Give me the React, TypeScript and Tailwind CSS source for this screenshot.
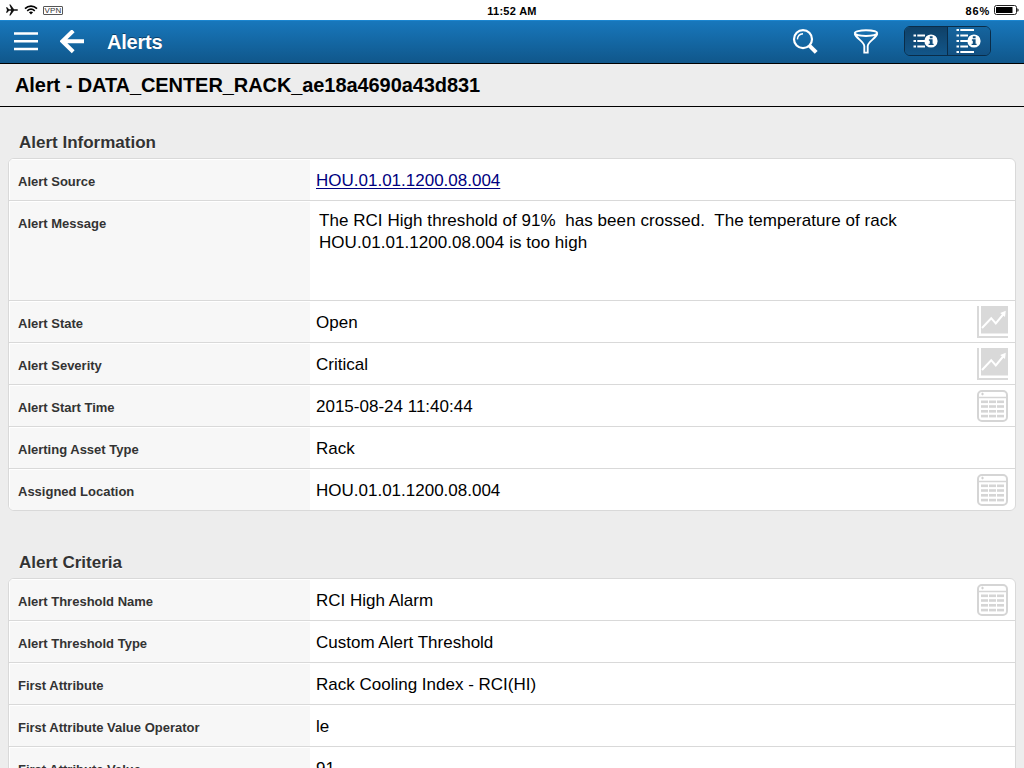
import React from "react";

type IconKind = "chart" | "table";

interface Field {
  label: string;
  value: string;
  link?: boolean;
  multiline?: boolean;
  icon?: IconKind;
}

const information: Field[] = [
  { label: "Alert Source", value: "HOU.01.01.1200.08.004", link: true },
  {
    label: "Alert Message",
    value:
      "The RCI High threshold of 91%  has been crossed.  The temperature of rack\nHOU.01.01.1200.08.004 is too high",
    multiline: true,
  },
  { label: "Alert State", value: "Open", icon: "chart" },
  { label: "Alert Severity", value: "Critical", icon: "chart" },
  { label: "Alert Start Time", value: "2015-08-24 11:40:44", icon: "table" },
  { label: "Alerting Asset Type", value: "Rack" },
  { label: "Assigned Location", value: "HOU.01.01.1200.08.004", icon: "table" },
];

const criteria: Field[] = [
  { label: "Alert Threshold Name", value: "RCI High Alarm", icon: "table" },
  { label: "Alert Threshold Type", value: "Custom Alert Threshold" },
  { label: "First Attribute", value: "Rack Cooling Index - RCI(HI)" },
  { label: "First Attribute Value Operator", value: "le" },
  { label: "First Attribute Value", value: "91" },
];

function ChartIcon() {
  return (
    <svg width="32" height="34" viewBox="0 0 32 34" className="block">
      <path d="M1 1V32H31" fill="none" stroke="#d9d9d9" strokeWidth="2" />
      <rect x="4" y="1" width="27" height="27.5" fill="#d9d9d9" />
      <path d="M5 23L14.2 13.2L18.8 18.5L26.5 9" fill="none" stroke="#fff" strokeWidth="2" />
      <path d="M28.8 5.8L28 12L23.2 8Z" fill="#fff" />
    </svg>
  );
}

function TableIcon() {
  return (
    <svg width="32" height="34" viewBox="0 0 32 34" className="block">
      <rect x="1" y="2" width="29" height="30" rx="4" fill="#fff" stroke="#d5d5d5" strokeWidth="2" />
      <path d="M1 8.5H30" stroke="#d5d5d5" strokeWidth="1.3" />
      <path d="M4 5H7M5.5 3.7V6.3" stroke="#d0d0d0" strokeWidth="1" />
      {[11.5, 16.2, 21, 25.8].map((y) => (
        <g key={y} fill="#d5d5d5">
          <rect x="4" y={y} width="7" height="2.6" />
          <rect x="12" y={y} width="7" height="2.6" />
          <rect x="20" y={y} width="7" height="2.6" />
        </g>
      ))}
    </svg>
  );
}

function InfoBadge() {
  return (
    <g>
      <circle cx="18" cy="13" r="6.6" fill="#fff" />
      <path
        d="M16.8 8.2h2.8v2.1h-2.8zM15.9 11.3h3.7v4.4h1v1.4h-5v-1.4h1.2v-3h-.9z"
        fill="#12507f"
      />
    </g>
  );
}

function ListInfoIcon({ long }: { long?: boolean }) {
  const rows = long ? [2, 7.5, 13, 18.5, 24] : [7.6, 13, 18.4];
  return (
    <svg width="26" height="26" viewBox="0 0 26 26" className="block">
      {rows.map((y, i) => {
        const outer = long && (i === 0 || i === rows.length - 1);
        return (
          <path
            key={y}
            d={`M0.5 ${y}H3M4.3 ${y}H${outer ? 18 : 12}`}
            stroke="#fff"
            strokeWidth="2"
          />
        );
      })}
      <InfoBadge />
    </svg>
  );
}

function StatusBar() {
  return (
    <div className="flex h-5 shrink-0 items-center justify-between bg-white pl-[5px] pr-[5px] text-black">
      <div className="flex w-[200px] items-center">
        <svg width="14" height="12" viewBox="0 0 14 12" className="block">
          <path
            d="M1 3.2H2.2L4 5.2H6.2L4.3 0.5H5.5L9 5.2H12C13.4 5.2 13.4 6.8 12 6.8H9L5.5 11.5H4.3L6.2 6.8H4L2.2 8.8H1L2 6Z"
            fill="#111"
          />
        </svg>
        <svg width="14" height="10" viewBox="0 0 14 10" className="ml-[5px] block">
          <path d="M1 3.6C4.5 0.4 9.5 0.4 13 3.6" fill="none" stroke="#000" strokeWidth="1.7" />
          <path d="M3.2 5.8C5.4 3.9 8.6 3.9 10.8 5.8" fill="none" stroke="#000" strokeWidth="1.6" />
          <path d="M4.9 7.2C6.2 6.1 7.8 6.1 9.1 7.2L7 9.4Z" fill="#000" />
        </svg>
        <div className="ml-[5px] flex h-[9px] w-5 items-center justify-center rounded-[1px] border border-[#555] pt-px text-[8px] leading-none tracking-[0.2px] text-[#333]">
          VPN
        </div>
      </div>
      <div className="pt-[2px] text-[11px] font-bold leading-none tracking-[0.3px]">11:52 AM</div>
      <div className="flex w-[200px] items-center justify-end">
        <span className="pt-[2px] text-[11px] font-bold leading-none tracking-[0.8px]">86%</span>
        <svg width="25" height="10" viewBox="0 0 25 10" className="ml-1 block">
          <rect x="0.5" y="0.5" width="22" height="9" rx="2" fill="none" stroke="#222" />
          <rect x="2" y="2" width="16.5" height="6" fill="#000" />
          <path d="M23.4 3.2C25 3.6 25 6.4 23.4 6.8Z" fill="#000" />
        </svg>
      </div>
    </div>
  );
}

function NavBar() {
  return (
    <header className="flex h-11 shrink-0 items-center border-b border-black bg-linear-to-b from-[#1878bd] to-[#10578b] pl-3.5 pr-[33px] shadow-[inset_0_1px_0_#1c86d0]">
      <svg width="24" height="24" viewBox="0 0 24 24" className="block">
        <path d="M0 3.5H24M0 11.2H24M0 19H24" stroke="#fff" strokeWidth="2.6" />
      </svg>
      <svg width="24" height="24" viewBox="0 0 24 24" className="ml-[22px] block">
        <path d="M24 11.2H3M13.2 0.7L2.4 11.2L13.2 21.7" fill="none" stroke="#fff" strokeWidth="4" />
      </svg>
      <h1 className="ml-[23px] text-[20px] font-bold leading-6 tracking-[-0.2px] text-white [text-shadow:0_-1px_0_#0d3f68]">
        Alerts
      </h1>
      <div className="ml-auto flex items-center">
        <svg width="26" height="26" viewBox="0 0 26 26" className="block">
          <circle cx="11" cy="10.2" r="9" fill="none" stroke="#fff" strokeWidth="2.2" />
          <path d="M5.4 10.4C5.6 7 7.8 4.9 11 4.7" fill="none" stroke="#fff" strokeWidth="1.4" />
          <path d="M17.4 16.6L24.2 23.4" stroke="#fff" strokeWidth="4" />
        </svg>
        <svg width="26" height="26" viewBox="0 0 26 26" className="ml-[35px] block">
          <ellipse cx="13" cy="4.1" rx="11.2" ry="2.9" fill="none" stroke="#fff" strokeWidth="1.9" />
          <path
            d="M1.8 4.5C2.4 9 11 12.5 11.3 17V23.6H14.7V17C15 12.5 23.6 9 24.2 4.5"
            fill="none"
            stroke="#fff"
            strokeWidth="1.9"
          />
        </svg>
        <div className="-mt-px ml-[25px] flex h-[30px] w-[87px] overflow-hidden rounded-[6px] border border-[#0a2c48]">
          <div className="flex w-[43px] items-center justify-center border-r border-[#0a2c48] bg-linear-to-b from-[#0f4168] to-[#12568a]">
            <ListInfoIcon />
          </div>
          <div className="flex flex-1 items-center justify-center bg-linear-to-b from-[#15659f] to-[#125082]">
            <ListInfoIcon long />
          </div>
        </div>
      </div>
    </header>
  );
}

function FieldRow({ field }: { field: Field }) {
  return (
    <div
      className={`flex border-b border-[#d9d9d9] last:border-b-0 ${
        field.multiline ? "h-[100px]" : "h-[42px] last:h-[41px]"
      }`}
    >
      <div className="w-[301px] shrink-0 border-l border-t border-white bg-[#f7f7f7] pl-2 pt-[14px] text-[13px] font-bold leading-4 text-[#333]">
        {field.label}
      </div>
      <div
        className={`flex-1 whitespace-pre text-[17px] leading-[22px] text-black ${
          field.multiline ? "pl-[9px] pt-[9px] tracking-[0.05px]" : "pl-1.5 pt-[11px]"
        }`}
      >
        {field.link ? (
          <a className="text-[#000080] underline underline-offset-2">{field.value}</a>
        ) : (
          field.value
        )}
      </div>
      {field.icon && (
        <div className="w-[38px] shrink-0 pt-1">
          {field.icon === "chart" ? <ChartIcon /> : <TableIcon />}
        </div>
      )}
    </div>
  );
}

function Section({ title, fields }: { title: string; fields: Field[] }) {
  return (
    <section className="mx-2 mb-[41px] shrink-0">
      <h3 className="h-[26px] pl-[11px] pt-px text-[17px] font-bold leading-5 text-[#333] [text-shadow:0_1px_0_#fff]">
        {title}
      </h3>
      <div className="overflow-hidden rounded-[6px] border border-[#d9d9d9] bg-white">
        {fields.map((field) => (
          <FieldRow key={field.label} field={field} />
        ))}
      </div>
    </section>
  );
}

export default function App() {
  return (
    <div className="flex h-[768px] w-[1024px] flex-col overflow-hidden bg-[#ededed] font-['Liberation_Sans',Arial,sans-serif]">
      <StatusBar />
      <NavBar />
      <h2 className="h-[43px] shrink-0 border-b border-black pl-[15px] pt-[9px] text-[20px] font-bold leading-6 tracking-[-0.08px] text-black">
        Alert - DATA_CENTER_RACK_ae18a4690a43d831
      </h2>
      <main className="flex min-h-0 flex-1 flex-col overflow-hidden pt-[25px]">
        <Section title="Alert Information" fields={information} />
        <Section title="Alert Criteria" fields={criteria} />
      </main>
    </div>
  );
}
